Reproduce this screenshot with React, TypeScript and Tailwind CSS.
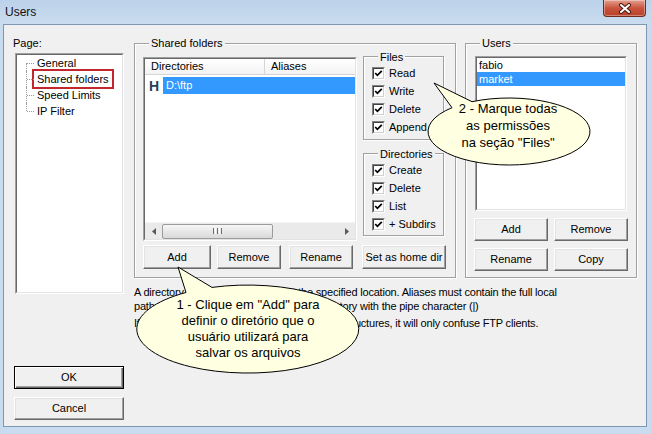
import React from "react";

type Kids = { className?: string; children?: React.ReactNode };

// classic sunken frame used by list boxes
function Sunken({ className = "", children }: Kids) {
  return (
    <div className={`border border-[#a0a0a0] border-r-white border-b-white ${className}`}>
      <div className="w-full h-full border border-[#696969] border-r-[#e3e3e3] border-b-[#e3e3e3] bg-white flex flex-col overflow-hidden">
        {children}
      </div>
    </div>
  );
}

function Button({ label, className = "", isDefault = false }: { label: string; className?: string; isDefault?: boolean }) {
  const edge = isDefault
    ? "border border-black shadow-[inset_1px_1px_0_#fff,inset_-1px_-1px_0_#696969,inset_-2px_-2px_0_#a0a0a0]"
    : "border border-white border-r-[#696969] border-b-[#696969] shadow-[inset_-1px_-1px_0_#a0a0a0,inset_1px_1px_0_#e3e3e3]";
  return (
    <button type="button" className={`flex items-center justify-center bg-[#f0f0f0] text-[11px] leading-none ${edge} ${className}`}>
      {label}
    </button>
  );
}

function Group({ title, className = "", children }: Kids & { title: string }) {
  return (
    <div className={`border border-[#a0a0a0] shadow-[1px_1px_0_#fff,inset_1px_1px_0_#fff] ${className}`}>
      <div className="-mt-[8px] ml-[6px] w-fit px-[2px] bg-[#f0f0f0] leading-[14px]">{title}</div>
      {children}
    </div>
  );
}

function CheckRow({ label }: { label: string }) {
  return (
    <div className="flex items-center h-[18px] gap-[4px]">
      <div className="w-[13px] h-[13px] border border-[#808080] border-r-white border-b-white">
        <div className="w-full h-full border border-[#404040] border-r-[#d4d0c8] border-b-[#d4d0c8] bg-white flex items-center justify-center">
          <svg width="9" height="9" viewBox="0 0 9 9">
            <path d="M1.2 4 L3.4 6.3 L7.8 1.9" fill="none" stroke="#000" strokeWidth="1.8" />
          </svg>
        </div>
      </div>
      <span className="leading-[14px]">{label}</span>
    </div>
  );
}

function TreeItem({ label, first = false, last = false, marked = false }: { label: string; first?: boolean; last?: boolean; marked?: boolean }) {
  return (
    <div className="flex items-center h-[16px]">
      <div className="relative w-[9px] h-full ml-[9px]">
        <div className={`absolute left-0 border-l border-dotted border-[#9a9a9a] ${first ? "top-1/2" : "top-0"} ${last ? "bottom-1/2" : "bottom-0"}`} />
        <div className="absolute left-[1px] right-[1px] top-1/2 border-t border-dotted border-[#9a9a9a]" />
      </div>
      <span className={`px-[2px] leading-[14px] ${marked ? "outline-2 outline-offset-[1px] outline-[#c1272d]" : ""}`}>{label}</span>
    </div>
  );
}

function HScroll() {
  return (
    <div className="h-[17px] flex items-center bg-[#eaeaea] border-t border-[#f4f4f4]">
      <div className="w-[17px] h-full flex items-center justify-center">
        <svg width="4" height="7" viewBox="0 0 4 7"><path d="M4 0 L0 3.5 L4 7 Z" fill="#5a5a5a" /></svg>
      </div>
      <div className="w-[111px] h-[15px] rounded-[2px] border border-[#9b9b9b] bg-linear-to-b from-[#f6f6f6] to-[#d9d9d9] flex items-center justify-center gap-[1px]">
        <span className="w-[1px] h-[6px] bg-[#6f6f6f]" />
        <span className="w-[1px] h-[6px] bg-white" />
        <span className="w-[1px] h-[6px] bg-[#6f6f6f]" />
        <span className="w-[1px] h-[6px] bg-white" />
        <span className="w-[1px] h-[6px] bg-[#6f6f6f]" />
      </div>
      <div className="flex-1" />
      <div className="w-[17px] h-full flex items-center justify-center">
        <svg width="4" height="7" viewBox="0 0 4 7"><path d="M0 0 L4 3.5 L0 7 Z" fill="#5a5a5a" /></svg>
      </div>
    </div>
  );
}

export default function App() {
  return (
    <div className="relative w-[651px] h-[434px] overflow-hidden bg-[#c9dbee] font-['Liberation_Sans',Arial,sans-serif] text-[11px] text-black">
      {/* Title bar */}
      <div className="h-[24px] flex items-center pl-[5px] bg-linear-to-b from-[#bcd2ea] to-[#cadcef]">
        <span className="text-[12px] text-[#111]">Users</span>
      </div>
      <div className="absolute right-[5px] top-0 w-[43px] h-[17px] rounded-b-[4px] border border-t-0 border-[#6e2b22] bg-linear-to-b from-[#e3a090] via-[#c9533d] to-[#b8412a] flex items-center justify-center shadow-[inset_0_0_0_1px_rgba(255,255,255,0.35)]">
        <svg width="14" height="11" viewBox="0 0 14 11">
          <path d="M3 2 L11 9 M11 2 L3 9" stroke="#4a1a12" strokeWidth="4" strokeLinecap="round" />
          <path d="M3 2 L11 9 M11 2 L3 9" stroke="#fff" strokeWidth="2" strokeLinecap="round" />
        </svg>
      </div>

      {/* Client area */}
      <div className="ml-[3px] w-[644px] h-[403px] border border-[#7f97b3] bg-[#f0f0f0] flex">
        {/* Page list */}
        <div className="ml-[10px] w-[110px] flex flex-col pt-[11px] pb-[6px]">
          <div className="-ml-[1px] leading-[14px]">Page:</div>
          <Sunken className="mt-[3px] ml-[1px] w-[109px] h-[241px]">
            <div>
              <TreeItem label="General" first />
              <TreeItem label="Shared folders" marked />
              <TreeItem label="Speed Limits" />
              <TreeItem label="IP Filter" last />
            </div>
          </Sunken>
          <div className="mt-auto flex flex-col gap-[8px]">
            <Button label="OK" isDefault className="w-[110px] h-[23px]" />
            <Button label="Cancel" className="w-[110px] h-[23px]" />
          </div>
        </div>

        {/* Main */}
        <div className="ml-[10px] pt-[18px] flex flex-col">
          <div className="flex gap-[9px]">
            <Group title="Shared folders" className="w-[322px] pl-[8px] pr-[9px] pb-[8px]">
              <div className="flex items-start">
                <Sunken className="mt-[7px] w-[214px] h-[184px]">
                  <div className="h-[16px] flex bg-linear-to-b from-white to-[#f3f3f3] border-b border-[#d5d5d5]">
                    <div className="w-[120px] pl-[6px] flex items-center border-r border-[#d5d5d5]">Directories</div>
                    <div className="pl-[6px] flex items-center">Aliases</div>
                  </div>
                  <div className="mt-[2px] h-[17px] flex items-center">
                    <span className="w-[18px] pl-[4px] text-[14px] font-bold text-[#23415a] leading-none">H</span>
                    <div className="flex-1 h-full bg-[#3399ff] text-white flex items-center pl-[3px]">D:\ftp</div>
                  </div>
                  <div className="flex-1" />
                  <HScroll />
                </Sunken>
                <div className="mt-[6px] ml-[6px] flex flex-col">
                  <Group title="Files" className="w-[81px] pl-[8px] pt-[1px] pb-[3px]">
                    <CheckRow label="Read" />
                    <CheckRow label="Write" />
                    <CheckRow label="Delete" />
                    <CheckRow label="Append" />
                  </Group>
                  <Group title="Directories" className="mt-[13px] w-[81px] pl-[8px] pt-[1px] pb-[2px]">
                    <CheckRow label="Create" />
                    <CheckRow label="Delete" />
                    <CheckRow label="List" />
                    <CheckRow label="+ Subdirs" />
                  </Group>
                </div>
              </div>
              <div className="mt-[4px] flex">
                <Button label="Add" className="w-[68px] h-[24px]" />
                <Button label="Remove" className="ml-[6px] w-[64px] h-[24px]" />
                <Button label="Rename" className="ml-[8px] w-[64px] h-[24px]" />
                <Button label="Set as home dir" className="ml-[9px] w-[84px] h-[24px]" />
              </div>
            </Group>

            <Group title="Users" className="w-[172px] pl-[8px] pb-[6px]">
              <Sunken className="mt-[6px] ml-[1px] w-[152px] h-[155px]">
                <div className="h-[14px] pl-[2px] flex items-center">fabio</div>
                <div className="h-[14px] pl-[2px] flex items-center bg-[#3399ff] text-white">market</div>
              </Sunken>
              <div className="mt-[7px] grid grid-cols-[74px_74px] gap-x-[6px] gap-y-[7px]">
                <Button label="Add" className="h-[23px]" />
                <Button label="Remove" className="h-[23px]" />
                <Button label="Rename" className="h-[23px]" />
                <Button label="Copy" className="h-[23px]" />
              </div>
            </Group>
          </div>

          <div className="mt-[7px] leading-[14px] tracking-[-0.2px]">
            <p>A directory alias will also appear at the specified location. Aliases must contain the full local</p>
            <p>path. Separate multiple aliases for one directory with the pipe character (|)</p>
            <p className="mt-[3px]">If using aliases, please avoid cyclic directory structures, it will only confuse FTP clients.</p>
          </div>
        </div>
      </div>

      {/* Annotation balloons */}
      <div className="absolute inset-0 pointer-events-none">
        <svg width="651" height="434" className="absolute inset-0">
          <path d="M186 292.5 L178 267 L212 287.4 A111 44 0 1 1 186 292.5 Z" fill="#ffffe1" stroke="#000" strokeWidth="1" />
          <path d="M452 107.7 L434 83 L472 101.7 A81 33.5 0 1 1 452 107.7 Z" fill="#ffffe1" stroke="#000" strokeWidth="1" />
        </svg>
        <div className="absolute left-[148px] top-[297px] w-[200px] text-center text-[13px] leading-[16px]">
          <div>1 - Clique em "Add" para</div>
          <div>definir o diretório que o</div>
          <div>usuário utilizará para</div>
          <div>salvar os arquivos</div>
        </div>
        <div className="absolute left-[438px] top-[100px] w-[140px] text-center text-[13px] leading-[17px]">
          <div>2 - Marque todas</div>
          <div>as permissões</div>
          <div>na seção "Files"</div>
        </div>
      </div>
    </div>
  );
}
